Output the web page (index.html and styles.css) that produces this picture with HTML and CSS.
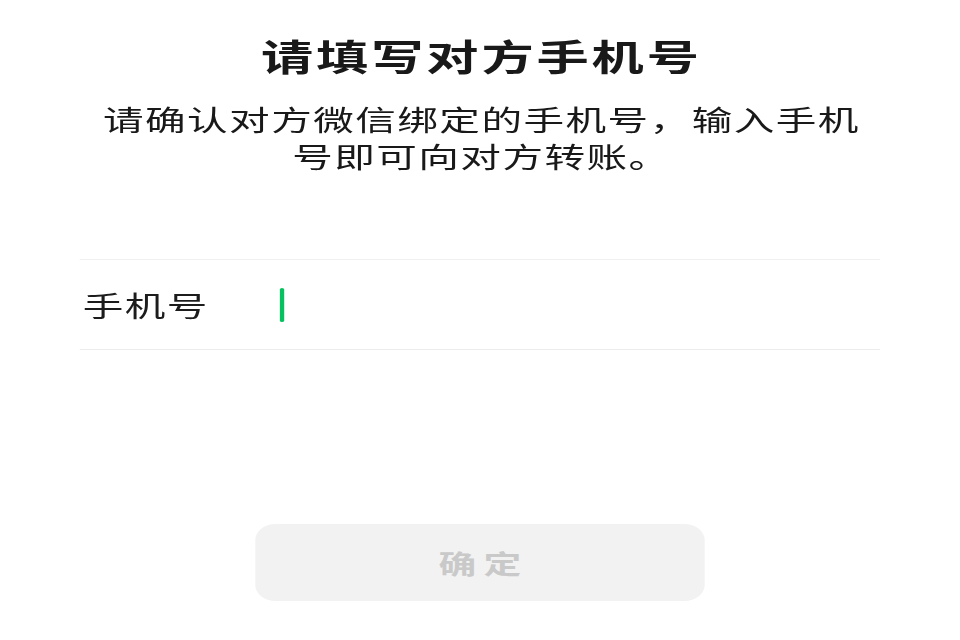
FILE: index.html
```html
<!DOCTYPE html>
<html lang="zh-CN">

<head>
  <meta charset="UTF-8">
  <title>请填写对方手机号</title>
  <link rel="stylesheet" href="styles.css">
</head>

<body>

  <!-- the phone view is drawn wider than tall, so the whole page is stretched -->
  <div class="page">
    <h1 class="title">请填写对方手机号</h1>
    <p class="subtitle">请确认对方微信绑定的手机号，输入手机号即可向对方转账。</p>

    <div class="field">
      <label class="field-label" for="phoneInput">手机号</label>
      <div class="field-input">
        <span class="cursor"></span>
        <input type="tel" id="phoneInput" autocomplete="off">
      </div>
    </div>

    <div class="actions">
      <button class="btn-confirm" disabled>确定</button>
    </div>
  </div>

</body>

</html>
```

FILE: styles.css
```css
/* Transfer by phone number */

body {
  margin: 0;
  padding: 0;
  background-color: #fff;
  font-family: "Noto Sans CJK SC", "Noto Sans", sans-serif;
  color: #191919;
  overflow: hidden;
}

.page {
  width: 662px;
  height: 640px;
  padding-top: 34px;
  box-sizing: border-box;
  transform: scaleX(1.45);
  transform-origin: 0 0;
}

.title {
  margin: 0;
  font-size: 36px;
  line-height: 42px;
  font-weight: 700;
  letter-spacing: 2px;
  text-indent: 2px;
  text-align: center;
}

.subtitle {
  margin: 25px 0 0;
  padding: 0 62px 0 64px;
  font-size: 28px;
  line-height: 37px;
  letter-spacing: 1px;
  text-align: center;
}

.field {
  display: flex;
  align-items: center;
  height: 89px;
  margin: 84px 55px 0;
  border-top: 1px solid #f0f0f0;
  border-bottom: 1px solid #ececec;
}

.field-label {
  width: 136px;
  padding-left: 2px;
  font-size: 28px;
  letter-spacing: 1px;
  color: #1c1c1c;
}

.field-input {
  flex: 1;
  display: flex;
  align-items: center;
  height: 100%;
}

.cursor {
  width: 3.4px;
  height: 34px;
  border-radius: 2px;
  background-color: #07c160;
}

.field-input input {
  flex: 1;
  width: 0;
  height: 100%;
  padding: 0;
  border: none;
  outline: none;
  background: transparent;
  font: inherit;
}

.actions {
  display: flex;
  justify-content: center;
  margin-top: 174px;
}

.btn-confirm {
  width: 310px;
  height: 77px;
  border: none;
  border-radius: 14px / 16px;
  background-color: #f2f2f2;
  color: #c9c9c9;
  font-family: inherit;
  font-size: 26px;
  font-weight: 700;
  letter-spacing: 5px;
  text-indent: 5px;
}
```
